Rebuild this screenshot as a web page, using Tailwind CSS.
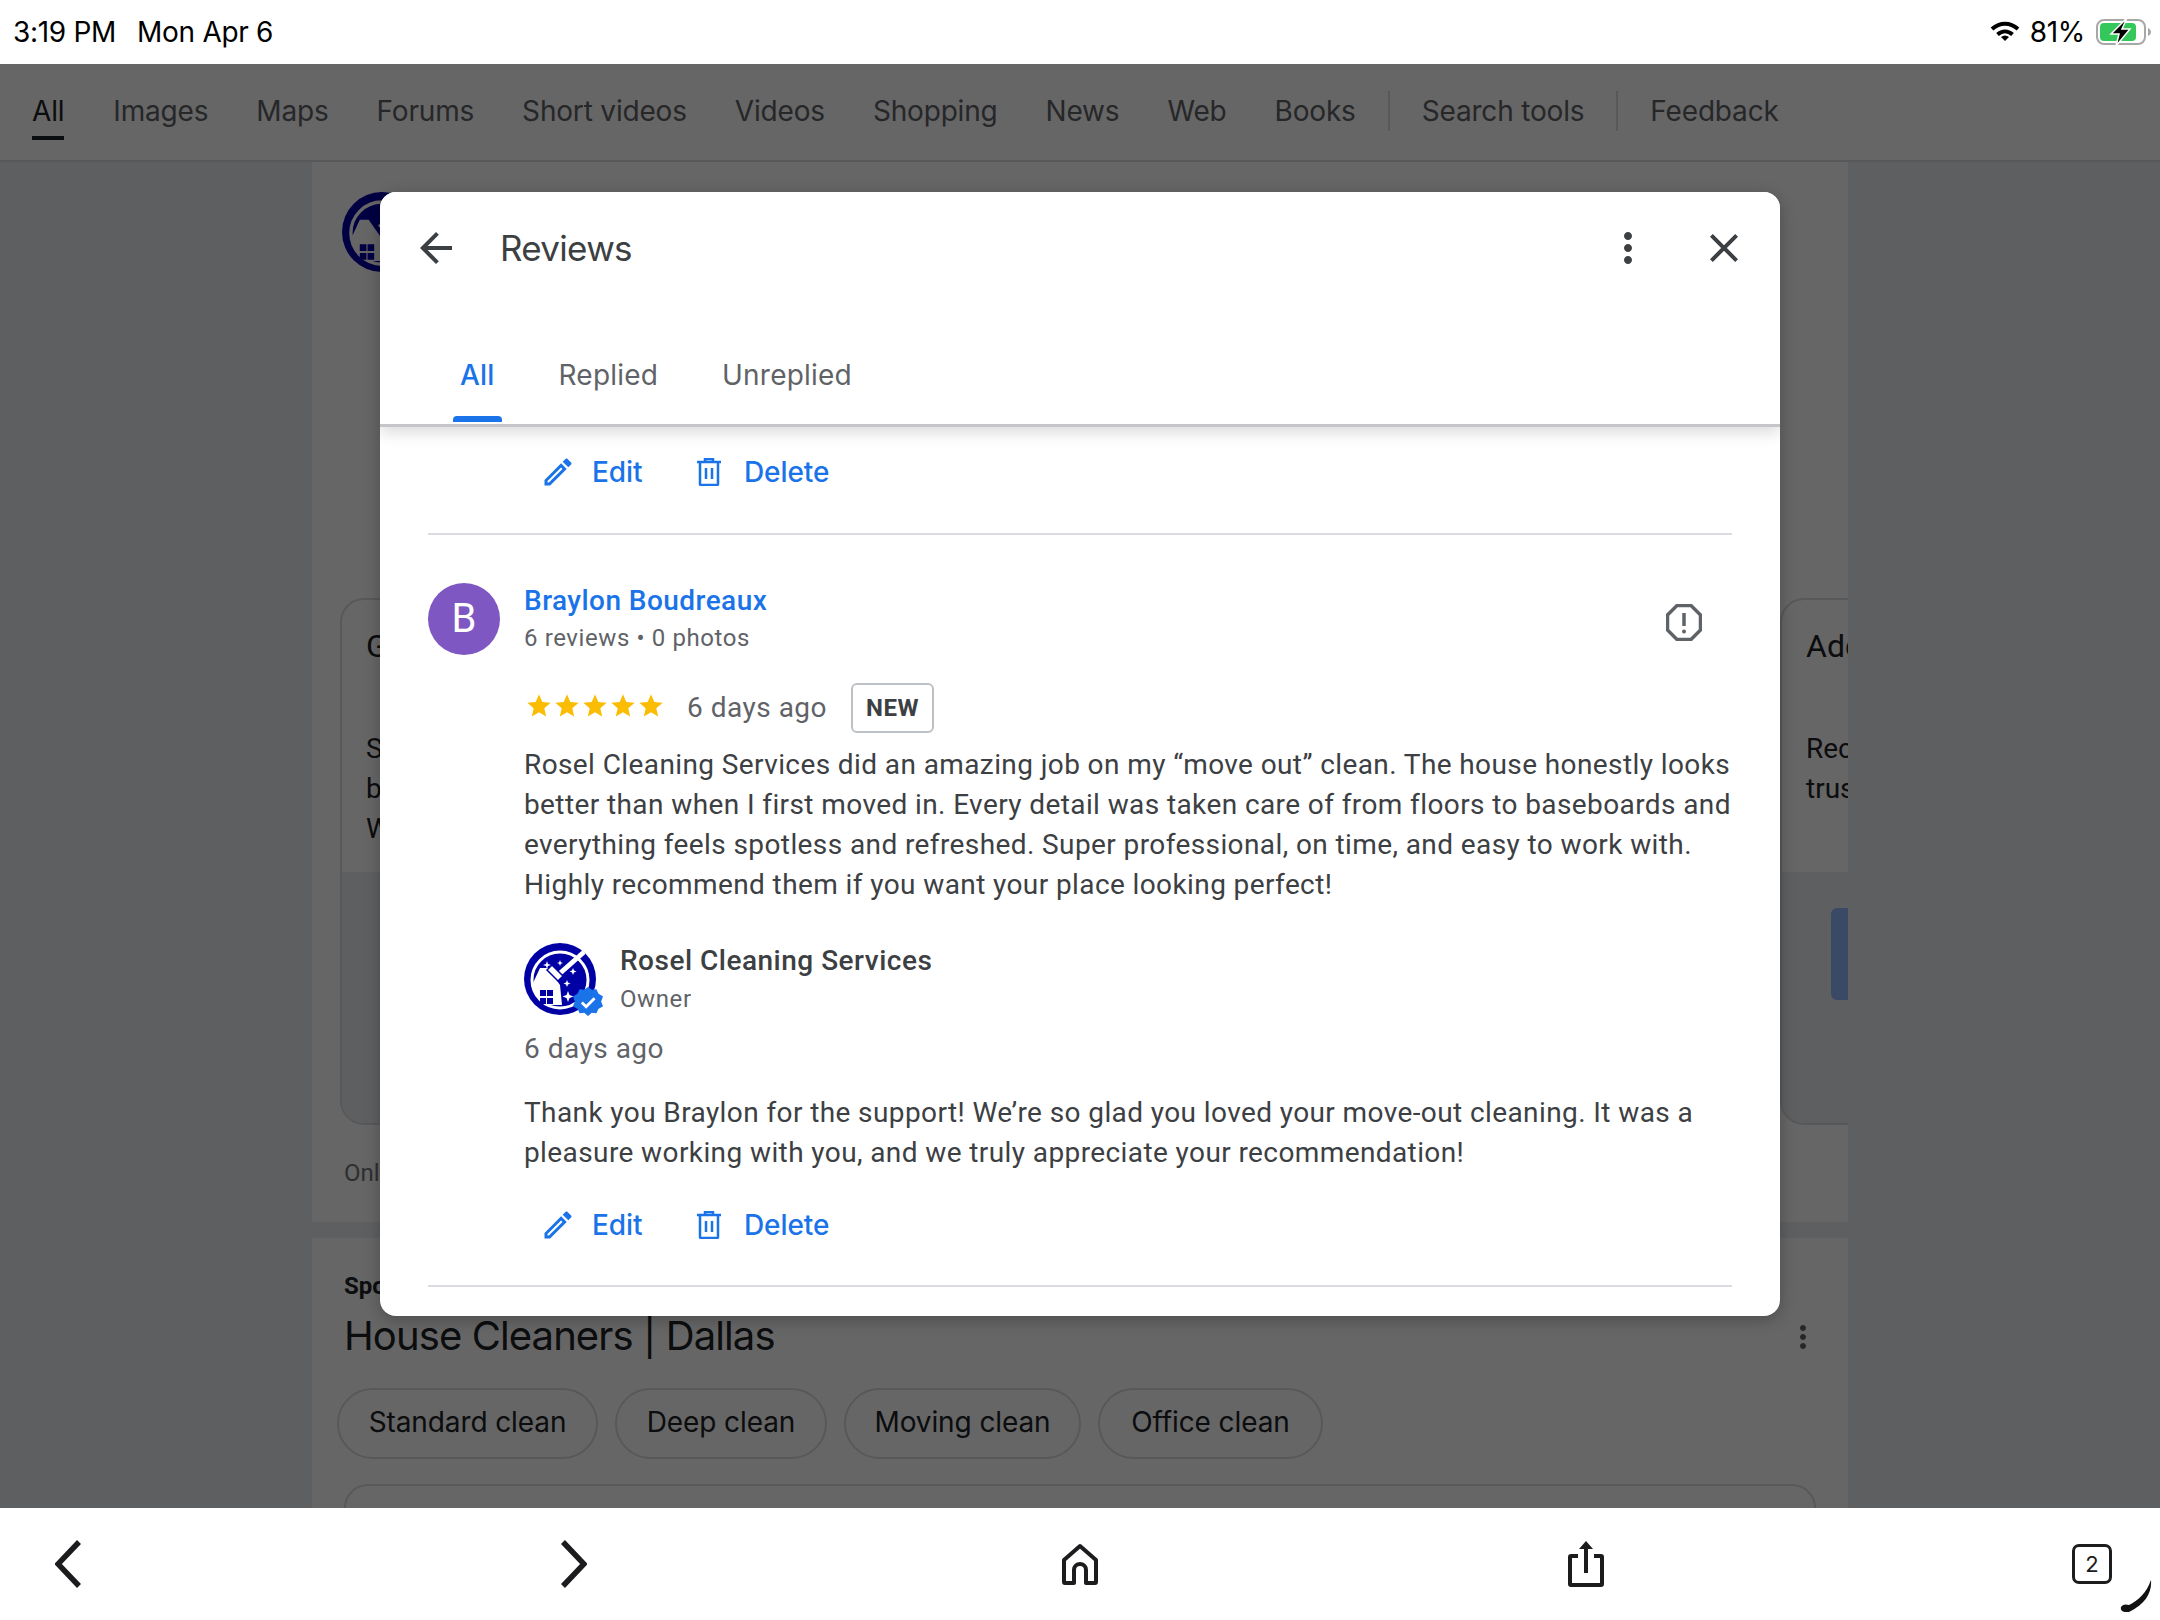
<!DOCTYPE html>
<html lang="en">
<head>
    <meta charset="UTF-8">
    <meta name="viewport" content="width=device-width, initial-scale=1.0">
    <title>Reviews</title>
    <script src="https://cdn.jsdelivr.net/npm/@tailwindcss/browser@4"></script>
</head>
<body class="w-[2160px] h-[1620px] overflow-hidden bg-white font-['Roboto',sans-serif]">
    <!-- status bar -->
    <div class="h-[64px] flex items-center justify-between pl-[13px] pr-[8px] text-[28px] text-black font-['Inter',sans-serif]">
        <div class="flex gap-[21px] tracking-[-0.3px]">
            <span>3:19 PM</span>
            <span>Mon Apr 6</span>
        </div>
        <div class="flex items-center">
            <svg class="w-[30px] h-[24px]" viewBox="0 0 30 24" fill="none" stroke="#000" stroke-width="4">
                <path d="M2 9c8-7 18-7 26 0"/>
                <path d="M7.500 14.500c4.500-4 10.500-4 15 0"/>
                <path d="M15 21l-4-4c2.500-2 5.500-2 8 0z" fill="#000" stroke="none"/>
            </svg>
            <span class="ml-[10px] tracking-[-0.3px]">81%</span>
            <svg class="ml-[11px] w-[56px] h-[30px]" viewBox="0 0 56 30" fill="none">
                <rect x="1" y="3" width="48" height="24" rx="7" stroke="#a8a8a8" stroke-width="2"/>
                <rect x="4" y="6" width="36" height="18" rx="4" fill="#34c759"/>
                <path d="M52 11c2 1 3 2 3 4s-1 3-3 4z" fill="#a8a8a8"/>
                <path d="M31 1 15 17h8l-3 12 14-17h-8z" fill="#000" stroke="#fff" stroke-width="1.500"/>
            </svg>
        </div>
    </div>

    <main class="relative h-[1444px] overflow-hidden bg-[#ebeef2]">
        <!-- search page behind the dialog -->
        <nav class="h-[98px] flex items-center bg-white border-b-2 border-[#dadce0] pl-[32px] pb-[2px] text-[28px] text-[#5f6368] font-['Inter',sans-serif] tracking-[-0.18px]">
            <div class="relative text-[#202124]">All<div class="absolute left-0 right-0 top-[46px] h-[4px] bg-[#202124]"></div></div>
            <span class="ml-[49px]">Images</span>
            <span class="ml-[48px]">Maps</span>
            <span class="ml-[48px]">Forums</span>
            <span class="ml-[48px]">Short videos</span>
            <span class="ml-[48px]">Videos</span>
            <span class="ml-[48px]">Shopping</span>
            <span class="ml-[48px]">News</span>
            <span class="ml-[48px]">Web</span>
            <span class="ml-[48px]">Books</span>
            <div class="ml-[32px] w-[2px] h-[40px] bg-[#dadce0]"></div>
            <span class="ml-[32px]">Search tools</span>
            <div class="ml-[32px] w-[2px] h-[40px] bg-[#dadce0]"></div>
            <span class="ml-[32px]">Feedback</span>
        </nav>

        <div class="ml-[312px] w-[1536px] h-[1346px] overflow-hidden">
            <section class="h-[1060px] bg-white pl-[28px] pt-[30px]">
                <svg class="ml-[2px] w-[80px] h-[80px]" viewBox="0 0 72 72">
                    <circle cx="36" cy="36" r="36" fill="#0000a5"/>
                    <circle cx="36" cy="37" r="28" fill="#0000a5" stroke="#fff" stroke-width="3"/>
                    <path d="M9 40 16 25h8l12 17 2 20H22C14 58 9 50 9 40z" fill="#fff"/>
                    <path d="M60 9 34 32" stroke="#fff" stroke-width="5"/>
                    <path d="M16 47h6v6h-6zM23 47h6v6h-6zM16 55h6v6h-6zM23 55h6v6h-6z" fill="#0000a5"/>
                </svg>
                <div class="mt-[326px] flex gap-[15px] w-[2100px]">
                    <div class="w-[1425px] h-[527px] shrink-0 border-2 border-[#dadce0] rounded-[24px] overflow-hidden flex flex-col">
                        <div class="h-[272px] pl-[24px] text-[#202124]">
                            <p class="mt-[24px] h-[44px] text-[32px] leading-[44px]">Get</p>
                            <p class="mt-[61px] text-[28px] leading-[40px]">Share<br>bring<br>We</p>
                        </div>
                        <div class="flex-1 bg-[#ebeef2]"></div>
                    </div>
                    <div class="w-[600px] h-[527px] shrink-0 border-2 border-[#dadce0] rounded-[24px] overflow-hidden flex flex-col">
                        <div class="h-[272px] pl-[24px] text-[#202124]">
                            <p class="mt-[24px] h-[44px] text-[32px] leading-[44px]">Add</p>
                            <p class="mt-[61px] text-[28px] leading-[40px]">Recent<br>trust</p>
                        </div>
                        <div class="flex-1 bg-[#ebeef2] pt-[36px] pl-[49px]">
                            <div class="w-[200px] h-[92px] rounded-[6px] bg-[#91b9ff]"></div>
                        </div>
                    </div>
                </div>
                <p class="mt-[32px] ml-[4px] text-[24px] leading-[32px] text-[#70757a]">Only</p>
            </section>
            <div class="h-[16px]"></div>
            <section class="relative h-[270px] bg-white pl-[32px] pr-[32px]">
                <p class="pt-[34px] text-[24px] leading-[28px] font-bold text-[#202124]">Sponsored</p>
                <div class="flex items-center justify-between h-[48px] mt-[12px]">
                    <h2 class="text-[40px] leading-[48px] text-[#202124] font-['Inter',sans-serif] tracking-[-0.9px]">House Cleaners | Dallas</h2>
                    <svg class="w-[36px] h-[36px] -mr-[5px] mt-[2px]" viewBox="0 0 24 24" fill="#5f6368"><path d="M12 8c1.100 0 2-.9 2-2s-.9-2-2-2-2 .9-2 2 .9 2 2 2zm0 2c-1.100 0-2 .9-2 2s.9 2 2 2 2-.9 2-2-.9-2-2-2zm0 6c-1.100 0-2 .9-2 2s.9 2 2 2 2-.9 2-2-.9-2-2-2z"/></svg>
                </div>
                <div class="flex gap-[17px] mt-[28px] -ml-[7px] text-[28px] text-[#202124] font-['Inter',sans-serif] tracking-[-0.1px]">
                    <span class="h-[71px] w-[261px] pb-[3px] flex items-center justify-center rounded-full border-2 border-[#dadce0]">Standard clean</span>
                    <span class="h-[71px] w-[212px] pb-[3px] flex items-center justify-center rounded-full border-2 border-[#dadce0]">Deep clean</span>
                    <span class="h-[71px] w-[237px] pb-[3px] flex items-center justify-center rounded-full border-2 border-[#dadce0]">Moving clean</span>
                    <span class="h-[71px] w-[225px] pb-[3px] flex items-center justify-center rounded-full border-2 border-[#dadce0]">Office clean</span>
                </div>
                <div class="mt-[25px] h-[60px] border-2 border-[#dadce0] rounded-[24px]"></div>
            </section>
        </div>

        <!-- dim layer -->
        <div class="absolute inset-0 bg-black/60"></div>

        <!-- reviews dialog -->
        <div class="absolute left-[380px] top-[128px] w-[1400px] h-[1124px] bg-white rounded-[16px] overflow-hidden shadow-[0_4px_16px_rgba(0,0,0,0.25)]">
            <header class="relative z-10 h-[235px] bg-white border-b-[3px] border-[#c4c6c9] shadow-[0_6px_14px_rgba(0,0,0,0.14)]">
                <div class="h-[112px] flex items-center pl-[32px] pr-[32px]">
                    <svg class="w-[48px] h-[48px]" viewBox="0 0 24 24" fill="#3c4043"><path d="M20 11H7.830l5.590-5.590L12 4l-8 8 8 8 1.410-1.410L7.830 13H20v-2z"/></svg>
                    <h1 class="ml-[40px] text-[35px] text-[#3c4043] font-['Inter',sans-serif] tracking-[-0.7px]">Reviews</h1>
                    <svg class="ml-auto w-[48px] h-[48px]" viewBox="0 0 24 24" fill="#3c4043"><path d="M12 8c1.100 0 2-.9 2-2s-.9-2-2-2-2 .9-2 2 .9 2 2 2zm0 2c-1.100 0-2 .9-2 2s.9 2 2 2 2-.9 2-2-.9-2-2-2zm0 6c-1.100 0-2 .9-2 2s.9 2 2 2 2-.9 2-2-.9-2-2-2z"/></svg>
                    <svg class="ml-[48px] w-[48px] h-[48px]" viewBox="0 0 24 24" fill="#3c4043"><path d="M19 6.410 17.590 5 12 10.590 6.410 5 5 6.410 10.590 12 5 17.590 6.410 19 12 13.410 17.590 19 19 17.590 13.410 12z"/></svg>
                </div>
                <div class="flex mt-[49px] pl-[80px] text-[28px] leading-[44px] text-[#5f6368] font-['Inter',sans-serif] tracking-[0.2px]">
                    <div class="relative font-medium text-[#1a73e8]">All<div class="absolute -left-[7px] -right-[7px] top-[63px] h-[6px] rounded-t-[4px] bg-[#1a73e8]"></div></div>
                    <span class="ml-[64px]">Replied</span>
                    <span class="ml-[64px]">Unreplied</span>
                </div>
            </header>

            <div class="px-[48px]">
                <!-- end of the previous review -->
                <div class="flex items-center h-[44px] mt-[23px] pl-[112px] text-[28px] text-[#1a73e8] font-medium font-['Inter',sans-serif] tracking-[-0.1px]">
                    <svg class="w-[36px] h-[36px]" viewBox="0 0 24 24" fill="#1a73e8"><path d="M14.060 9.020l.92.92L5.920 19H5v-.92l9.060-9.060M17.660 3c-.25 0-.51.1-.7.29l-1.830 1.830 3.750 3.750 1.830-1.830c.39-.39.39-1.020 0-1.410l-2.340-2.340c-.2-.2-.45-.29-.71-.29zm-3.600 3.190L3 17.250V21h3.750L17.810 9.940l-3.750-3.750z"/></svg>
                    <span class="ml-[16px] w-[51px]">Edit</span>
                    <svg class="ml-[54px] w-[24px] h-[28px]" viewBox="0 0 24 28" fill="none" stroke="#1a73e8" stroke-width="2.500"><path d="M0 4h24M8 4V1h8v3M3 4v22a1 1 0 0 0 1 1h16a1 1 0 0 0 1-1V4M9 10v11M15 10v11"/></svg>
                    <span class="ml-[23px]">Delete</span>
                </div>
                <div class="mt-[39px] h-[2px] bg-[#dadce0]"></div>

                <!-- review -->
                <div class="flex mt-[48px]">
                    <div class="w-[72px] h-[72px] rounded-full bg-[#7e57c2] flex items-center justify-center text-[40px] text-white">B</div>
                    <div class="ml-[24px] flex-1 flex justify-between">
                        <div>
                            <p class="text-[28px] leading-[36px] font-medium text-[#1a73e8] tracking-[0.45px]">Braylon Boudreaux</p>
                            <p class="mt-[1px] text-[24px] leading-[36px] text-[#5f6368] tracking-[0.6px]">6 reviews • 0 photos</p>
                        </div>
                        <svg class="mt-[21px] mr-[30px] w-[36px] h-[37px]" viewBox="0 0 36 37" fill="none" stroke="#5f6368" stroke-width="3.500"><path d="M11 1.500h14l9.500 9.500v15L25 35.500H11L1.500 26V11z"/><path d="M18 9v13"/><circle cx="18" cy="27.500" r="2" fill="#5f6368" stroke="none"/></svg>
                    </div>
                </div>
                <div class="ml-[96px]">
                    <div class="flex items-center h-[50px] mt-[27px]">
                        <div class="flex -mt-[4px] ml-[1px]">
                            <svg class="w-[28px] h-[28px]" viewBox="0 0 24 24" fill="#fbbc04"><path d="M12 17.270 18.180 21l-1.640-7.030L22 9.240l-7.190-.61L12 2 9.190 8.630 2 9.240l5.460 4.730L5.820 21z"/></svg>
                            <svg class="w-[28px] h-[28px]" viewBox="0 0 24 24" fill="#fbbc04"><path d="M12 17.270 18.180 21l-1.640-7.030L22 9.240l-7.190-.61L12 2 9.190 8.630 2 9.240l5.460 4.730L5.820 21z"/></svg>
                            <svg class="w-[28px] h-[28px]" viewBox="0 0 24 24" fill="#fbbc04"><path d="M12 17.270 18.180 21l-1.640-7.030L22 9.240l-7.190-.61L12 2 9.190 8.630 2 9.240l5.460 4.730L5.820 21z"/></svg>
                            <svg class="w-[28px] h-[28px]" viewBox="0 0 24 24" fill="#fbbc04"><path d="M12 17.270 18.180 21l-1.640-7.030L22 9.240l-7.190-.61L12 2 9.190 8.630 2 9.240l5.460 4.730L5.820 21z"/></svg>
                            <svg class="w-[28px] h-[28px]" viewBox="0 0 24 24" fill="#fbbc04"><path d="M12 17.270 18.180 21l-1.640-7.030L22 9.240l-7.190-.61L12 2 9.190 8.630 2 9.240l5.460 4.730L5.820 21z"/></svg>
                        </div>
                        <span class="ml-[22px] text-[28px] text-[#5f6368] tracking-[0.5px]">6 days ago</span>
                        <span class="ml-[24px] w-[83px] h-[50px] flex items-center justify-center rounded-[6px] border-2 border-[#bdc1c6] text-[24px] font-bold text-[#3c4043] tracking-[0.6px]">NEW</span>
                    </div>
                    <p class="mt-[12px] text-[28px] leading-[40px] text-[#3c4043] tracking-[0.4px] whitespace-nowrap">Rosel Cleaning Services did an amazing job on my “move out” clean. The house honestly looks<br>better than when I first moved in. Every detail was taken care of from floors to baseboards and<br>everything feels spotless and refreshed. Super professional, on time, and easy to work with.<br>Highly recommend them if you want your place looking perfect!</p>

                    <!-- owner reply -->
                    <div class="flex mt-[38px]">
                        <div class="relative w-[72px] h-[72px]">
                            <svg class="w-[72px] h-[72px]" viewBox="0 0 72 72">
                                <circle cx="36" cy="36" r="36" fill="#0000a5"/>
                                <circle cx="36" cy="37" r="28" fill="#0000a5" stroke="#fff" stroke-width="3"/>
                                <path d="M9 40 16 25h8l12 17 2 20H22C14 58 9 50 9 40z" fill="#fff"/>
                                <path d="M60 9 34 32" stroke="#fff" stroke-width="5"/>
                                <path d="M23 27l5-5 11 11-5 5z" fill="#fff" stroke="#0000a5" stroke-width="1.500"/>
                                <path d="M16 47h6v6h-6zM23 47h6v6h-6zM16 55h6v6h-6zM23 55h6v6h-6z" fill="#0000a5"/>
                                <path d="M23 18l1 3 3 1-3 1-1 3-1-3-3-1 3-1z M36 17l.8 2.200 2.200.8-2.200.8-.8 2.200-.8-2.200-2.200-.8 2.200-.8z M49 25l1 2.500 2.500 1-2.500 1-1 2.500-1-2.500-2.500-1 2.500-1z M43 37l1 2.500 2.500 1-2.500 1-1 2.500-1-2.500-2.500-1 2.500-1z M44 48l1.500 4 4 1.500-4 1.500-1.500 4-1.500-4-4-1.500 4-1.500z" fill="#fff"/>
                            </svg>
                            <svg class="absolute left-[49px] top-[44px] w-[30px] h-[30px]" viewBox="0 0 32 32">
                                <path d="M16 0l4 3 5-.5 2 4.500 5 3-2 5.500 2 5-5 3-2 4.500-5-.5-4 3.500-4-3.500-5 .5-2-4.500-5-3 2-5-2-5.500 5-3 2-4.500 5 .5z" fill="#1a73e8"/>
                                <path d="M9.500 16.500l4.500 4.500 9-9" fill="none" stroke="#fff" stroke-width="3"/>
                            </svg>
                        </div>
                        <div class="ml-[24px]">
                            <p class="text-[28px] leading-[36px] font-medium text-[#3c4043] tracking-[0.5px]">Rosel Cleaning Services</p>
                            <p class="mt-[2px] text-[24px] leading-[36px] text-[#5f6368] tracking-[0.6px]">Owner</p>
                        </div>
                    </div>
                    <p class="mt-[12px] text-[28px] leading-[40px] text-[#5f6368] tracking-[0.5px]">6 days ago</p>
                    <p class="mt-[24px] text-[28px] leading-[40px] text-[#3c4043] tracking-[0.4px] whitespace-nowrap">Thank you Braylon for the support! We’re so glad you loved your move-out cleaning. It was a<br>pleasure working with you, and we truly appreciate your recommendation!</p>
                </div>
                <div class="flex items-center h-[44px] mt-[30px] pl-[112px] text-[28px] text-[#1a73e8] font-medium font-['Inter',sans-serif] tracking-[-0.1px]">
                    <svg class="w-[36px] h-[36px]" viewBox="0 0 24 24" fill="#1a73e8"><path d="M14.060 9.020l.92.92L5.920 19H5v-.92l9.060-9.060M17.660 3c-.25 0-.51.1-.7.29l-1.830 1.830 3.750 3.750 1.830-1.830c.39-.39.39-1.020 0-1.410l-2.340-2.340c-.2-.2-.45-.29-.71-.29zm-3.600 3.190L3 17.250V21h3.750L17.810 9.940l-3.750-3.750z"/></svg>
                    <span class="ml-[16px] w-[51px]">Edit</span>
                    <svg class="ml-[54px] w-[24px] h-[28px]" viewBox="0 0 24 28" fill="none" stroke="#1a73e8" stroke-width="2.500"><path d="M0 4h24M8 4V1h8v3M3 4v22a1 1 0 0 0 1 1h16a1 1 0 0 0 1-1V4M9 10v11M15 10v11"/></svg>
                    <span class="ml-[23px]">Delete</span>
                </div>
                <div class="mt-[38px] h-[2px] bg-[#dadce0]"></div>
            </div>
        </div>
    </main>

    <!-- browser toolbar -->
    <div class="relative h-[112px] flex items-start justify-between px-[8px] pt-[32px]">
        <div class="w-[120px] h-[48px] flex justify-center">
            <svg class="w-[26px] h-[48px]" viewBox="0 0 26 48" fill="none" stroke="#1c1c1e" stroke-width="5.500"><path d="M24 2 3 24l21 22"/></svg>
        </div>
        <div class="w-[120px] h-[48px] flex justify-center">
            <svg class="w-[26px] h-[48px]" viewBox="0 0 26 48" fill="none" stroke="#1c1c1e" stroke-width="5.500"><path d="M2 2l21 22L2 46"/></svg>
        </div>
        <div class="w-[120px] h-[48px] flex justify-center">
            <svg class="w-[36px] h-[42px] mt-[3px]" viewBox="0 0 36 42" fill="none" stroke="#1c1c1e" stroke-width="4" stroke-linejoin="round"><path d="M18 3 2 17v22a1 1 0 0 0 1 1h9V27a6 6 0 0 1 12 0v13h9a1 1 0 0 0 1-1V17z"/></svg>
        </div>
        <div class="w-[120px] h-[48px] flex justify-center">
            <svg class="w-[36px] h-[48px]" viewBox="0 0 36 48" fill="none" stroke="#1c1c1e" stroke-width="4" stroke-linejoin="round"><path d="M10 16H3a1 1 0 0 0-1 1v27a1 1 0 0 0 1 1h30a1 1 0 0 0 1-1V17a1 1 0 0 0-1-1h-7"/><path d="M18 33V4"/><path d="M18 1l-7 8h14z" fill="#1c1c1e" stroke="none"/></svg>
        </div>
        <div class="w-[120px] h-[48px] flex justify-center">
            <div class="w-[40px] h-[40px] mt-[4px] rounded-[7px] border-[3.500px] border-[#1c1c1e] flex items-center justify-center text-[22px] text-[#1c1c1e] font-['Inter',sans-serif]">2</div>
        </div>
        <svg class="absolute left-[2120px] top-[72px] w-[32px] h-[32px]" viewBox="0 0 32 32" fill="#111"><path d="M31 0C32 12 26 24 9 32 3 33 0 30 1 27 3 24 6 24 9 25 18 21 27 12 31 0z"/></svg>
    </div>
</body>
</html>
